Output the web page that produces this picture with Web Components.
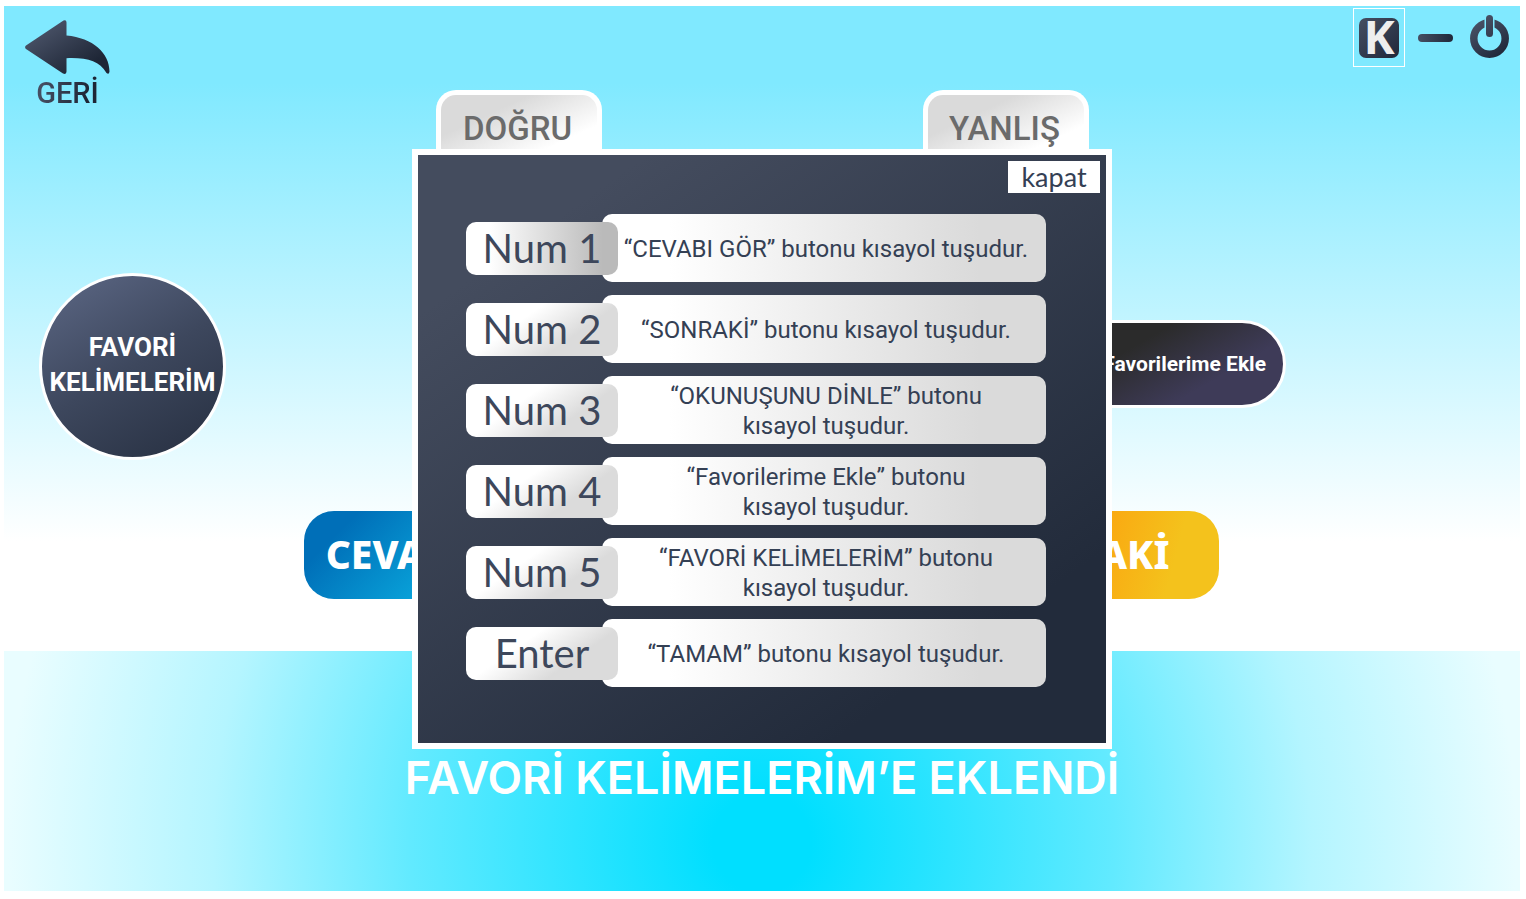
<!DOCTYPE html>
<html lang="tr">
<head>
<meta charset="utf-8">
<title>Favori Kelimelerim</title>
<style>
body { margin: 0; background: #fff; font-family: Roboto, "Noto Sans", sans-serif; }
</style>
</head>
<body>
<word-screen>
  <back-button slot="back">GERİ</back-button>
  <result-tab slot="tabs">DOĞRU</result-tab>
  <result-tab slot="tabs">YANLIŞ</result-tab>
  <window-tools slot="tools"></window-tools>
  <round-button slot="middle">FAVORİ<br>KELİMELERİM</round-button>
  <pill-button slot="middle">Favorilerime Ekle</pill-button>
  <action-button slot="actions" tone="blue">CEVABI GÖR</action-button>
  <action-button slot="actions" tone="amber">SONRAKİ</action-button>
  <span slot="message">FAVORİ KELİMELERİM’E EKLENDİ</span>
  <shortcut-dialog slot="dialog">
    <shortcut-row key="Num 1" dark>“CEVABI GÖR” butonu kısayol tuşudur.</shortcut-row>
    <shortcut-row key="Num 2">“SONRAKİ” butonu kısayol tuşudur.</shortcut-row>
    <shortcut-row key="Num 3">“OKUNUŞUNU DİNLE” butonu<br>kısayol tuşudur.</shortcut-row>
    <shortcut-row key="Num 4">“Favorilerime Ekle” butonu<br>kısayol tuşudur.</shortcut-row>
    <shortcut-row key="Num 5">“FAVORİ KELİMELERİM” butonu<br>kısayol tuşudur.</shortcut-row>
    <shortcut-row key="Enter">“TAMAM” butonu kısayol tuşudur.</shortcut-row>
  </shortcut-dialog>
</word-screen>

<script>
const define = (name, render) => customElements.define(name, class extends HTMLElement {
  constructor() {
    super();
    this.attachShadow({ mode: 'open' });
  }
  connectedCallback() {
    this.shadowRoot.innerHTML = `<style>
      *, *::before, *::after { box-sizing: border-box; }
      button { font: inherit; color: inherit; margin: 0; padding: 0; border: 0; background: none; cursor: pointer; }
    </style>` + render(this);
  }
});

define('word-screen', () => `
  <style>
    :host { display: flex; flex-direction: column; position: relative; min-height: 100vh; box-sizing: border-box; padding: 6px 6px 8px 4px; }
    main { flex: 1; background: linear-gradient(#80e9ff 0%, #80e9ff 12%, #fff 83%); }
    header { display: grid; grid-template-columns: 1fr auto 1fr; align-items: start; }
    .back { padding: 14px 0 0 21px; }
    .tabs { display: flex; gap: 321px; padding-top: 84px; }
    .tools { display: flex; justify-content: flex-end; padding: 2px 11px 0 0; }
    .middle { display: flex; justify-content: space-between; align-items: center; padding: 113px 234px 0 35px; }
    .actions { display: flex; justify-content: space-between; padding: 51px 301px 0 300px; }
    footer { height: 240px; padding-top: 100px; text-align: center; color: #fff; font: 600 45px/54px Inter, sans-serif;
      background: radial-gradient(circle 820px at 50% 80%, #00dfff 0%, #00dfff 6%, #62eaff 43%, #b4f5ff 67%, #e9fdff 92%); }
  </style>
  <main>
    <header>
      <div class="back"><slot name="back"></slot></div>
      <div class="tabs"><slot name="tabs"></slot></div>
      <div class="tools"><slot name="tools"></slot></div>
    </header>
    <div class="middle"><slot name="middle"></slot></div>
    <div class="actions"><slot name="actions"></slot></div>
  </main>
  <footer><slot name="message"></slot></footer>
  <slot name="dialog"></slot>`);

define('back-button', () => `
  <style>
    :host { display: inline-block; }
    button { display: flex; flex-direction: column; align-items: center; font-size: 29px; line-height: 34px; font-weight: 500; }
    svg { display: block; }
    span { background: linear-gradient(100deg, #454e62 10%, #1e2636 80%); background-clip: text; color: transparent; }
  </style>
  <button type="button">
    <svg width="85" height="56" viewBox="0 0 85 56" aria-hidden="true">
      <defs><linearGradient id="g" x1="0" y1="0" x2="1" y2="1"><stop offset=".15" stop-color="#4a5368"/><stop offset=".8" stop-color="#1e2636"/></linearGradient></defs>
      <path fill="url(#g)" d="M1 25.500 38.500.6Q41.500-.5 41.500 2.500V15.500C68 18 84.500 33 84.500 51.500Q84 55 81.500 53C74 40.500 62 37.500 41.500 38.200V51.500Q41.500 55 38 53.500L1 29Q-.8 27.200 1 25.500Z"/>
    </svg>
    <span><slot></slot></span>
  </button>`);

define('result-tab', () => `
  <style>
    :host { display: block; }
    button { width: 166px; height: 70px; border: 5px solid #fff; border-bottom: 0; border-radius: 20px 20px 0 0; padding: 15px 2px 0 0;
      display: flex; justify-content: center; align-items: flex-start; font-size: 33px; line-height: 38px; font-weight: 500; color: #6b6b6b;
      background: linear-gradient(155deg, #dadada 30%, #fff 75%); }
  </style>
  <button type="button"><slot></slot></button>`);

define('window-tools', () => `
  <style>
    :host { display: flex; align-items: flex-start; }
    .key { width: 52px; height: 59px; border: 1px solid #fff; display: grid; place-items: center; }
    .key b { width: 40px; height: 40px; border-radius: 7px; background: linear-gradient(135deg, #454e62, #20283a);
      color: #eee; font: 700 47px/36px "Noto Sans", sans-serif; text-align: center; }
    .min { margin: 26px 17px 0 13px; }
    .power { margin-top: 7px; }
    svg { display: block; }
  </style>
  <button class="key" type="button" aria-label="Kısayollar"><b>K</b></button>
  <button class="min" type="button" aria-label="Küçült">
    <svg width="35" height="8"><defs><linearGradient id="m"><stop stop-color="#454e62"/><stop offset="1" stop-color="#20283a"/></linearGradient></defs><rect width="35" height="8" rx="4" fill="url(#m)"/></svg>
  </button>
  <button class="power" type="button" aria-label="Kapat">
    <svg width="39" height="43" viewBox="0 0 39 43">
      <defs>
        <linearGradient id="p" gradientUnits="userSpaceOnUse" x1="6" y1="4" x2="32" y2="40"><stop stop-color="#4a5368"/><stop offset="1" stop-color="#20283a"/></linearGradient>
        <clipPath id="c"><path d="M0 0H14.500V24H24.500V0H39V43H0Z"/></clipPath>
      </defs>
      <circle cx="19.500" cy="23.500" r="15.700" fill="none" stroke="url(#p)" stroke-width="7.500" clip-path="url(#c)"/>
      <rect x="16" y="0" width="7" height="22" rx="3.500" fill="url(#p)"/>
    </svg>
  </button>`);

define('round-button', () => `
  <style>
    :host { display: block; }
    button { width: 187px; height: 187px; border: 3px solid #fff; border-radius: 50%; color: #fff; font-size: 26px; line-height: 35px; font-weight: 700;
      padding-bottom: 4px; display: grid; place-items: center; white-space: nowrap;
      background: linear-gradient(150deg, #56617d 12%, #3d475d 50%, #2a3345 90%); background-origin: border-box; }
  </style>
  <button type="button"><span><slot></slot></span></button>`);

define('pill-button', () => `
  <style>
    :host { display: block; padding-bottom: 6px; }
    button { height: 88px; padding: 0 17px 0 60px; border: 3px solid #fff; border-radius: 44px; color: #fff; font-size: 21px; line-height: 28px; font-weight: 700;
      background: linear-gradient(150deg, #2b2b2b 35%, #3e3b58 70%); background-origin: border-box; }
  </style>
  <button type="button"><slot></slot></button>`);

define('action-button', () => `
  <style>
    :host { display: block; }
    button { width: 280px; height: 88px; padding-bottom: 3px; border-radius: 30px; color: #fff; font: 800 39px/52px "Noto Sans", sans-serif;
      background: linear-gradient(135deg, #006fb8 15%, #0bb0e2 65%); }
    :host([tone="amber"]) button { background: linear-gradient(105deg, #fba30f 50%, #f4c21c 82%); }
  </style>
  <button type="button"><slot></slot></button>`);

define('shortcut-dialog', () => `
  <style>
    :host { position: absolute; top: 149px; left: 4px; right: 6px; margin: 0 auto; width: 700px; box-sizing: border-box; display: block;
      border: 6px solid #fff; padding: 6px 6px 56px; background: linear-gradient(145deg, #444c5e 15%, #222b3b 82%); color: #344054; }
    .bar { display: flex; justify-content: flex-end; }
    .bar button { width: 92px; height: 32px; background: #fff; font: 400 27px/28px Lato, sans-serif; }
    .rows { display: flex; flex-direction: column; gap: 13px; margin: 21px 54px 0 42px; }
  </style>
  <section role="dialog" aria-label="Kısayol tuşları">
    <div class="bar"><button type="button">kapat</button></div>
    <div class="rows"><slot></slot></div>
  </section>`);

define('shortcut-row', (el) => `
  <style>
    :host { display: flex; align-items: center; }
    kbd { width: 152px; height: 53px; flex: none; z-index: 1; border-radius: 10px; text-align: center; color: #3d475b;
      font: 400 40px/52px Lato, sans-serif; background: linear-gradient(145deg, #fff 35%, #dbdbdb 68%); }
    :host([dark]) kbd { background: linear-gradient(90deg, #fff 15%, #bababa 90%); }
    .text { flex: 1; height: 68px; margin-left: -16px; padding: 2px 0 0 4px; border-radius: 10px; display: grid; place-items: center; text-align: center;
      font-size: 24px; line-height: 30px; white-space: nowrap; background: linear-gradient(90deg, #fff 15%, #dadada 85%); }
  </style>
  <kbd>${el.getAttribute('key')}</kbd>
  <div class="text"><span><slot></slot></span></div>`);
</script>
</body>
</html>
